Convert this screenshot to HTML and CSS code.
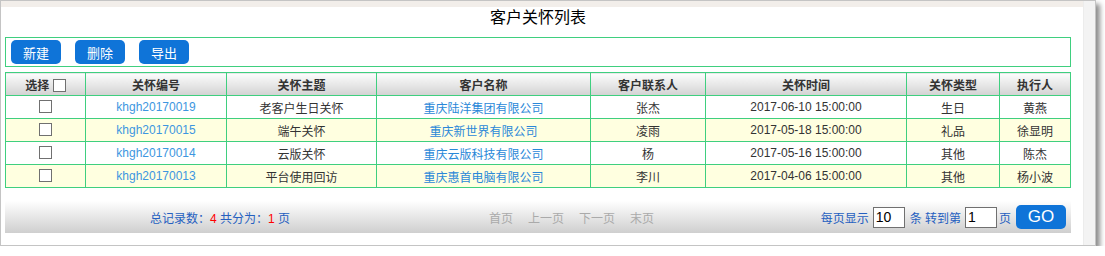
FILE: index.html
```html
<!DOCTYPE html>
<html lang="zh-CN">
<head>
    <meta charset="UTF-8">
    <title>客户关怀列表</title>
    <link rel="stylesheet" href="styles.css">
</head>
<body>
    <div class="window">
        <div class="main">
            <div class="topstrip"></div>
            <h2 class="title">客户关怀列表</h2>

            <!-- toolbar -->
            <div class="toolbar">
                <button class="btn">新建</button>
                <button class="btn">删除</button>
                <button class="btn">导出</button>
            </div>

            <table class="list">
                <colgroup>
                    <col style="width:80px">
                    <col style="width:141px">
                    <col style="width:150px">
                    <col style="width:214px">
                    <col style="width:115px">
                    <col style="width:201px">
                    <col style="width:93px">
                    <col style="width:71px">
                </colgroup>
                <thead>
                    <tr>
                        <th>选择 <input type="checkbox" class="chk"></th>
                        <th>关怀编号</th>
                        <th>关怀主题</th>
                        <th>客户名称</th>
                        <th>客户联系人</th>
                        <th>关怀时间</th>
                        <th>关怀类型</th>
                        <th>执行人</th>
                    </tr>
                </thead>
                <tbody>
                    <tr>
                        <td><input type="checkbox" class="chk"></td>
                        <td><a class="code">khgh20170019</a></td>
                        <td>老客户生日关怀</td>
                        <td><a class="company">重庆陆洋集团有限公司</a></td>
                        <td>张杰</td>
                        <td>2017-06-10 15:00:00</td>
                        <td>生日</td>
                        <td>黄燕</td>
                    </tr>
                    <tr class="odd">
                        <td><input type="checkbox" class="chk"></td>
                        <td><a class="code">khgh20170015</a></td>
                        <td>端午关怀</td>
                        <td><a class="company">重庆新世界有限公司</a></td>
                        <td>凌雨</td>
                        <td>2017-05-18 15:00:00</td>
                        <td>礼品</td>
                        <td>徐显明</td>
                    </tr>
                    <tr>
                        <td><input type="checkbox" class="chk"></td>
                        <td><a class="code">khgh20170014</a></td>
                        <td>云版关怀</td>
                        <td><a class="company">重庆云版科技有限公司</a></td>
                        <td>杨</td>
                        <td>2017-05-16 15:00:00</td>
                        <td>其他</td>
                        <td>陈杰</td>
                    </tr>
                    <tr class="odd">
                        <td><input type="checkbox" class="chk"></td>
                        <td><a class="code">khgh20170013</a></td>
                        <td>平台使用回访</td>
                        <td><a class="company">重庆惠首电脑有限公司</a></td>
                        <td>李川</td>
                        <td>2017-04-06 15:00:00</td>
                        <td>其他</td>
                        <td>杨小波</td>
                    </tr>
                </tbody>
            </table>

            <!-- pager -->
            <div class="pager">
                <div class="summary">总记录数：<span class="num">4</span> 共分为：<span class="num">1</span> 页</div>
                <div class="pages">
                    <span>首页</span>
                    <span>上一页</span>
                    <span>下一页</span>
                    <span>末页</span>
                </div>
                <div class="jump">
                    每页显示<input type="text" class="box size" value="10">条 转到第<input type="text" class="box page" value="1">页<button class="go">GO</button>
                </div>
            </div>
        </div>
        <div class="sidebar"></div>
    </div>
</body>
</html>
```

FILE: styles.css
```css
body {
    margin: 0;
    padding: 0;
    background: #fff;
    font-family: "Liberation Sans", "Noto Sans CJK SC", sans-serif;
    font-size: 12px;
    color: #333;
}
.window {
    display: flex;
    width: 1094px;
    height: 244px;
    border: 1px solid #c4c4c4;
    box-shadow: 4px 4px 5px rgba(0, 0, 0, 0.45);
    background: #fff;
}
.main {
    flex: 1;
    padding: 0 12px 0 4px;
}
.sidebar {
    width: 11px;
    background: #f3f3f3;
    border-left: 1px solid #ececec;
}
.topstrip {
    height: 6px;
    margin: 0 -12px 0 -4px;
    background: #f2eeea;
}
.title {
    margin: 0;
    height: 30px;
    line-height: 22px;
    text-align: center;
    font-size: 16px;
    font-weight: normal;
    color: #000;
}
.toolbar {
    display: flex;
    gap: 14px;
    height: 28px;
    padding: 0 5px;
    align-items: center;
    border: 1px solid #3fcf7f;
}
.btn {
    width: 50px;
    height: 24px;
    padding: 0;
    border: none;
    border-radius: 5px;
    background: #0f74d8;
    color: #fff;
    font-family: inherit;
    font-size: 13px;
    cursor: pointer;
}
.list {
    width: 1066px;
    margin-top: 5px;
    border-collapse: collapse;
    table-layout: fixed;
}
.list th, .list td {
    height: 22px;
    padding: 0;
    border: 1px solid #3fcf7f;
    text-align: center;
    white-space: nowrap;
}
.list th {
    background: linear-gradient(#fdfdfd, #d2d2d2);
    font-weight: bold;
    color: #333;
}
.list tr.odd td {
    background: #ffffe0;
}
.chk {
    appearance: none;
    width: 13px;
    height: 13px;
    margin: 0;
    border: 1px solid #707070;
    background: #fff;
    vertical-align: -2px;
}
.code {
    color: #3d96e0;
}
.company {
    color: #2a88d8;
}
.pager {
    display: flex;
    align-items: center;
    height: 32px;
    margin-top: 13px;
    background: linear-gradient(#ffffff, #cfcfcf);
    color: #2560c0;
    font-size: 12px;
}
.summary {
    width: 339px;
    padding-left: 145px;
}
.num {
    color: #f00;
}
.pages {
    display: flex;
    gap: 15px;
    color: #aaa;
}
.jump {
    display: flex;
    align-items: center;
    margin-left: auto;
    padding-right: 5px;
}
.box {
    width: 26px;
    height: 19px;
    padding: 0 2px;
    border: 1px solid #707070;
    font-family: inherit;
    font-size: 14px;
    color: #000;
}
.size {
    margin: 0 5px 0 4px;
}
.page {
    margin: 0 2px 0 4px;
}
.go {
    width: 50px;
    height: 24px;
    margin-left: 5px;
    padding: 0;
    border: none;
    border-radius: 5px;
    background: #0f74d8;
    color: #fff;
    font-family: inherit;
    font-size: 17px;
    cursor: pointer;
}
```
